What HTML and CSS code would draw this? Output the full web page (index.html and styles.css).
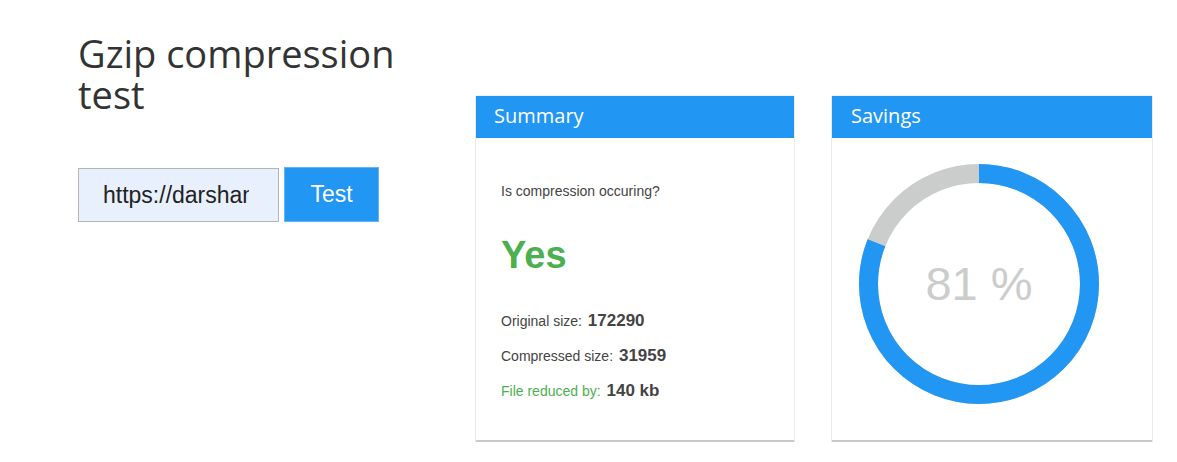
FILE: index.html
```html
<!DOCTYPE html>
<html lang="en">
<head>
<meta charset="utf-8">
<title>Gzip compression test</title>
<link rel="stylesheet" href="styles.css">
</head>
<body>
<div class="page">
  <div class="intro">
    <h1 class="title">Gzip compression test</h1>
    <form class="test-form">
      <input class="url-input" type="text" value="https://darshan.blog">
      <button class="test-btn" type="button">Test</button>
    </form>
  </div>
  <section class="card">
    <header class="card-head">Summary</header>
    <div class="card-body summary">
      <p class="question">Is compression occuring?</p>
      <p class="answer">Yes</p>
      <p class="stat">Original size: <b>172290</b></p>
      <p class="stat">Compressed size: <b>31959</b></p>
      <p class="stat reduced">File reduced by: <b>140 kb</b></p>
    </div>
  </section>
  <section class="card">
    <header class="card-head">Savings</header>
    <div class="card-body savings">
      <div class="donut">
        <svg width="240" height="240" viewBox="0 0 240 240">
          <circle cx="120" cy="120" r="110.5" fill="none" stroke="#cbcdcc" stroke-width="19"/>
          <circle cx="120" cy="120" r="110.5" fill="none" stroke="#2196f3" stroke-width="19"
            stroke-dasharray="562.4 694.3" transform="rotate(-90 120 120)"/>
        </svg>
        <span class="donut-label">81 %</span>
      </div>
    </div>
  </section>
</div>
</body>
</html>
```
FILE: styles.css
```css
html, body {
  margin: 0;
  padding: 0;
  background: #fff;
}
body {
  font-family: "Liberation Sans", Arial, sans-serif;
  color: #333;
}
.page {
  display: flex;
  align-items: flex-start;
  padding: 30px 0 0 78px;
  gap: 38px;
}
.intro {
  width: 360px;
}
.title {
  margin: 3px 0 0;
  font-family: "Open Sans", "Noto Sans", sans-serif;
  font-weight: 400;
  font-size: 38px;
  line-height: 41px;
  color: #333;
  width: 350px;
}
.test-form {
  display: flex;
  gap: 5px;
  margin-top: 52px;
}
.url-input {
  box-sizing: border-box;
  width: 201px;
  height: 54px;
  margin: 1px 0 0;
  padding: 0 29px 0 24px;
  border: 1px solid #b4b4b4;
  background: #e8f0fe;
  font-family: "Liberation Sans", Arial, sans-serif;
  font-size: 23px;
  color: #222;
  outline: none;
}
.test-btn {
  box-sizing: border-box;
  width: 95px;
  height: 55px;
  border: 1px solid #64b5f6;
  background: #2196f3;
  color: #fff;
  font-family: "Liberation Sans", Arial, sans-serif;
  font-size: 23px;
  padding: 0;
  cursor: pointer;
}
.card {
  box-sizing: border-box;
  width: 318px;
  height: 346px;
  margin-top: 66px;
  background: #fff;
  border-bottom: 2px solid #c6cacb;
  box-shadow: 0 0 1px rgba(0, 0, 0, 0.3), 0 1px 1px rgba(0, 0, 0, 0.2);
  display: flex;
  flex-direction: column;
}
.card + .card {
  width: 320px;
}
.card-head {
  height: 42px;
  background: #2196f3;
  color: #fff;
  font-family: "Open Sans", "Noto Sans", sans-serif;
  font-size: 20px;
  line-height: 40px;
  padding-left: 18px;
}
.card + .card .card-head {
  padding-left: 19px;
}
.summary {
  padding: 45px 25px 0;
}
.summary p {
  margin: 0;
}
.question {
  font-size: 14px;
  line-height: 16px;
  color: #444;
}
.answer {
  font-size: 38px;
  font-weight: 700;
  color: #4caf50;
  line-height: 40px;
  margin-top: 36px !important;
}
.stat {
  font-size: 14px;
  color: #444;
  line-height: 20px;
  margin-top: 15px !important;
}
.answer + .stat {
  margin-top: 36px !important;
}
.stat b {
  font-size: 17px;
  font-weight: 700;
  color: #444;
  margin-left: 2px;
}
.reduced {
  color: #4caf50;
}
.savings {
  padding: 26px 0 0 27px;
}
.donut {
  position: relative;
  width: 240px;
  height: 240px;
}
.donut svg {
  display: block;
}
.donut-label {
  position: absolute;
  inset: 0;
  display: flex;
  align-items: center;
  justify-content: center;
  font-size: 47px;
  color: #cbcdcc;
  padding-bottom: 2px;
}
```
